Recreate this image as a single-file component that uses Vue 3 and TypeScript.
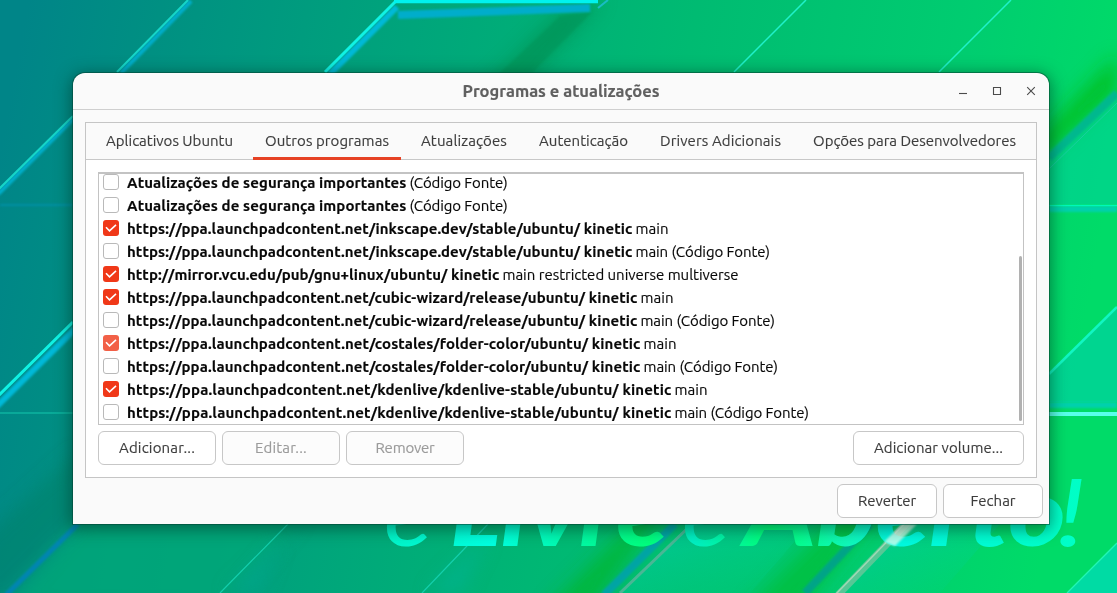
<script setup lang="ts">
import type { Directive } from 'vue'

interface Label { text: string; width: number }
interface Source { name: Label; detail: Label; checked?: boolean; partial?: boolean }

// Spreads the letters of a label so that it fills the given width.
const vFit: Directive<HTMLElement, number> = {
  mounted(el, { value }) {
    el.style.letterSpacing = '0px'
    const natural = el.getBoundingClientRect().width
    const count = (el.textContent ?? '').length
    el.style.letterSpacing = `${(value - natural) / count}px`
  },
}

const tabs: Label[] = [
  { text: 'Aplicativos Ubuntu', width: 127 },
  { text: 'Outros programas', width: 124 },
  { text: 'Atualizações', width: 86 },
  { text: 'Autenticação', width: 89 },
  { text: 'Drivers Adicionais', width: 121 },
  { text: 'Opções para Desenvolvedores', width: 203 },
]
const activeTab = 1

const ppa = (path: string, width: number): Label => ({
  text: `https://ppa.launchpadcontent.net/${path}/ubuntu/ kinetic`,
  width,
})
const main: Label = { text: 'main', width: 33 }
const mainSource: Label = { text: 'main (Código Fonte)', width: 134.5 }
const security: Source = {
  name: { text: 'Atualizações de segurança importantes', width: 279.5 },
  detail: { text: '(Código Fonte)', width: 98 },
}

const sources: Source[] = [
  security,
  security,
  { name: ppa('inkscape.dev/stable', 505.5), detail: main, checked: true },
  { name: ppa('inkscape.dev/stable', 505.5), detail: mainSource },
  {
    name: { text: 'http://mirror.vcu.edu/pub/gnu+linux/ubuntu/ kinetic', width: 372.5 },
    detail: { text: 'main restricted universe multiverse', width: 236 },
    checked: true,
  },
  { name: ppa('cubic-wizard/release', 510.5), detail: main, checked: true },
  { name: ppa('cubic-wizard/release', 510.5), detail: mainSource },
  { name: ppa('costales/folder-color', 513.5), detail: main, checked: true, partial: true },
  { name: ppa('costales/folder-color', 513.5), detail: mainSource },
  { name: ppa('kdenlive/kdenlive-stable', 544.5), detail: main, checked: true },
  { name: ppa('kdenlive/kdenlive-stable', 544.5), detail: mainSource },
]
</script>

<template>
  <div class="desktop">
    <svg class="wallpaper" viewBox="0 0 1117 593" width="1117" height="593">
      <defs>
        <linearGradient id="base" gradientUnits="userSpaceOnUse" x1="0" y1="150" x2="1080" y2="350">
          <stop offset="0" stop-color="#008588" />
          <stop offset="0.12" stop-color="#009082" />
          <stop offset="0.35" stop-color="#00a57b" />
          <stop offset="0.6" stop-color="#00bb72" />
          <stop offset="0.85" stop-color="#00cd70" />
          <stop offset="1" stop-color="#00db68" />
        </linearGradient>
        <linearGradient id="teal" x1="0" y1="0" x2="1" y2="1">
          <stop offset="0" stop-color="#00c8a8" stop-opacity="0.75" />
          <stop offset="1" stop-color="#00d68c" stop-opacity="0" />
        </linearGradient>
        <linearGradient id="letters" gradientUnits="userSpaceOnUse" x1="380" y1="0" x2="1090" y2="0">
          <stop offset="0" stop-color="#00f5c8" />
          <stop offset="0.16" stop-color="#00ffe0" />
          <stop offset="0.28" stop-color="#00f9a4" />
          <stop offset="0.38" stop-color="#00ff7c" />
          <stop offset="0.44" stop-color="#00efc4" />
          <stop offset="0.55" stop-color="#00ff78" />
          <stop offset="0.66" stop-color="#10f8ba" />
          <stop offset="0.72" stop-color="#00f9e0" />
          <stop offset="1" stop-color="#00ffc4" />
        </linearGradient>
        <filter id="soft" x="-30%" y="-30%" width="160%" height="160%"><feGaussianBlur stdDeviation="1" /></filter>
        <filter id="wide" x="-50%" y="-50%" width="200%" height="200%"><feGaussianBlur stdDeviation="9" /></filter>
      </defs>
      <rect width="1117" height="593" fill="url(#base)" />

      <!-- broad shading -->
      <g filter="url(#wide)">
        <path d="M-20 600V540L80 450V516L0 600Z" fill="#007f66" opacity="0.5" />
        <path d="M0 610L85 516H300L225 610Z" fill="#00a878" opacity="0.8" />
        <path d="M545 610L650 505H668L590 610Z" fill="#00b52d" opacity="0.75" />
        <path d="M745 610L845 510H880L800 610Z" fill="#00bd35" opacity="0.75" />
        <path d="M1030 170V145L1117 55V90Z" fill="#00bd22" opacity="0.85" />
      </g>
      <path d="M480 90L560 10L604 0L520 90Z" fill="#008f50" opacity="0.55" filter="url(#wide)" />
      <path d="M500 73L560 16L592 12L532 73Z" fill="#00955a" opacity="0.6" filter="url(#soft)" />
      <path d="M620 593L690 524H810L750 593Z" fill="url(#teal)" />
      <path d="M838 593L910 524H1000L940 593Z" fill="url(#teal)" />
      <path d="M1049 160L1117 94V204H1049Z" fill="#00d1a4" opacity="0.5" />
      <path d="M1049 374L1117 308V402H1049Z" fill="#00d1ac" opacity="0.6" />
      <path d="M1067 593L1117 543V593Z" fill="#00dba4" />
      <g filter="url(#wide)">
        <path d="M226 593L280 540L260 593Z" fill="#00a791" opacity="0.6" />
        <path d="M428 593L488 535L460 593Z" fill="#00b393" opacity="0.7" />
      </g>

      <!-- bevelled edges -->
      <g fill="none" filter="url(#soft)">
        <path d="M191 1L121 73M73 119L-2 194" stroke="#00aecb" stroke-width="4" />
        <path d="M397 7L330 74M76 328L-3 406" stroke="#00b9d8" stroke-width="6" />
        <path d="M398 15L590 8" stroke="#00adcb" stroke-width="8" />
        <path d="M0 205H73" stroke="#008fa5" stroke-width="2" />
        <path d="M78 524L6 595" stroke="#0085b2" stroke-width="5" />
        <path d="M675 524L604 595" stroke="#00a4a4" stroke-width="8" />
        <path d="M870 524L805 593" stroke="#00a487" stroke-width="8" />
        <path d="M1117 93L1049 158" stroke="#00b88e" stroke-width="8" />
        <path d="M1049 209H1117M1049 405H1117" stroke="#00d1ac" stroke-width="6" />
      </g>
      <g fill="none">
        <path d="M188 0L117 72M73 116L-2 190" stroke="#16d5c8" stroke-width="2" />
        <path d="M395 2L325 72M73 322L-2 396" stroke="#10f2e4" stroke-width="3" />
        <path d="M394 1.5H598" stroke="#00f2ee" stroke-width="3.5" />
        <path d="M608 0L598 8" stroke="#19bcc4" stroke-width="2" />
        <path d="M806 0L734 72M1011 0L939 72" stroke="#20f0ca" stroke-width="1.5" />
        <path d="M0 413H73" stroke="#13c8ae" stroke-width="1.2" />
        <path d="M288 524L220 593M488 524L422 593" stroke="#14cfad" stroke-width="1.2" />
        <path d="M692 524L620 593" stroke="#49b795" stroke-width="3" />
        <path d="M912 518L838 595" stroke="#57c796" stroke-width="7" />
        <path d="M910 518L835 595" stroke="#a1d9b4" stroke-width="1.5" />
        <path d="M1117 103L1049 169" stroke="#18ce9f" stroke-width="1" />
        <path d="M1049 205.5H1117" stroke="#00f7bb" stroke-width="1.5" />
        <path d="M1117 307L1049 374" stroke="#11f6c3" stroke-width="2.5" />
        <path d="M1049 414H1117" stroke="#58ffeb" stroke-width="4" />
        <path d="M1117 543L1067 593" stroke="#22f5b5" stroke-width="1.3" />
      </g>

      <g class="slogan" fill="url(#letters)">
        <text class="thin" x="384" y="546" textLength="48" lengthAdjust="spacingAndGlyphs">e</text>
        <text x="450" y="546" textLength="218" lengthAdjust="spacingAndGlyphs">Livre</text>
        <text class="thin" x="682" y="546" textLength="48" lengthAdjust="spacingAndGlyphs">e</text>
        <text x="744" y="546" textLength="322" lengthAdjust="spacingAndGlyphs">Aberto</text>
        <text class="mark" x="1056" y="546" textLength="30" lengthAdjust="spacingAndGlyphs">!</text>
      </g>
      <path d="M884 542L902 524H917L895 546Z" fill="#e1ffef" opacity="0.75" filter="url(#soft)" />
    </svg>

    <main class="window">
      <header class="titlebar">
        <h1><span v-fit="197">Programas e atualizações</span></h1>
        <div class="controls">
          <svg width="10" height="10" viewBox="0 0 10 10"><path d="M1 7.5H9" /></svg>
          <svg width="10" height="10" viewBox="0 0 10 10"><path d="M1.5 1.5H8.5V8.5H1.5Z" /></svg>
          <svg width="10" height="10" viewBox="0 0 10 10"><path d="M1.2 1.2L8.8 8.8M8.8 1.2L1.2 8.8" /></svg>
        </div>
      </header>

      <section class="notebook">
        <nav class="tabs">
          <button v-for="(tab, i) in tabs" :key="tab.text" class="tab" :class="{ active: i === activeTab }">
            <span v-fit="tab.width">{{ tab.text }}</span>
          </button>
        </nav>
        <div class="page">
          <div class="list">
            <div v-for="(source, i) in sources" :key="i" class="row">
              <span class="check" :class="{ checked: source.checked, partial: source.partial }">
                <svg v-if="source.checked" width="16" height="16" viewBox="0 0 16 16"><path d="M3 7.3L6.5 10.8L13 4.8" /></svg>
              </span>
              <strong v-fit="source.name.width">{{ source.name.text }}</strong>
              <span v-fit="source.detail.width" class="detail">{{ source.detail.text }}</span>
            </div>
            <div class="scrollbar"></div>
          </div>
          <div class="actions">
            <button class="btn"><span v-fit="76">Adicionar...</span></button>
            <button class="btn" disabled><span v-fit="52">Editar...</span></button>
            <button class="btn" disabled><span v-fit="59">Remover</span></button>
            <button class="btn volume"><span v-fit="129">Adicionar volume...</span></button>
          </div>
        </div>
      </section>

      <footer class="footer">
        <button class="btn"><span v-fit="58">Reverter</span></button>
        <button class="btn"><span v-fit="45">Fechar</span></button>
      </footer>
    </main>
  </div>
</template>

<style>
body { margin: 0; overflow: hidden; }
</style>

<style scoped>
.desktop {
  position: relative;
  box-sizing: border-box;
  width: 1117px;
  height: 593px;
  padding: 73px 68px 0 73px;
  overflow: hidden;
  font-family: Ubuntu, "Noto Sans", "Open Sans", sans-serif;
  font-size: 15px;
  color: #3d3d3d;
}
.desktop * { box-sizing: border-box; }
.wallpaper { position: absolute; inset: 0; }
.slogan text { font: italic 900 93px Lato, sans-serif; }
.slogan .thin { font-weight: 400; }
.slogan .mark { font-weight: 400; }
.window {
  position: relative;
  display: flex;
  flex-direction: column;
  width: 976px;
  height: 451px;
  background: #fafafa;
  border-radius: 12px 12px 0 0;
  box-shadow: 0 0 0 1px rgba(0, 65, 50, 0.5), 0 3px 16px 2px rgba(0, 40, 25, 0.5);
  -webkit-text-stroke: 0.15px currentColor;
}
span, strong { white-space: nowrap; }
.titlebar {
  display: grid;
  grid-template-columns: 1fr auto 1fr;
  align-items: center;
  height: 37px;
  padding-right: 13px;
  border-bottom: 1px solid #cfcfcf;
}
h1 {
  grid-column: 2;
  margin: 0 -13px 0 0;
  font-size: 16.5px;
  line-height: 20px;
  color: #606060;
}
.controls { display: flex; justify-content: flex-end; gap: 24px; }
.controls svg { fill: none; stroke: #4b4b4b; stroke-width: 1.1; }
.notebook {
  display: flex;
  flex-direction: column;
  height: 356px;
  margin: 12px 12px 0;
  border: 1px solid #c5c5c5;
  background: #fff;
}
.tabs {
  display: flex;
  gap: 8px;
  height: 37px;
  padding-left: 8px;
  flex: none;
  background: #fafafa;
  border-bottom: 1px solid #c8c8c8;
}
.tab {
  height: 37px;
  padding: 0 12px;
  border: 0;
  border-bottom: 3px solid transparent;
  background: none;
  font: inherit;
  color: inherit;
  line-height: 36px;
}
.tab.active { border-color: #e64224; }
.page { padding: 12px; }
.list {
  position: relative;
  height: 253px;
  padding-left: 4px;
  border: 1px solid #c3c3c3;
  border-top-width: 2px;
  overflow: hidden;
  color: #080808;
}
.row { display: flex; align-items: center; height: 23px; position: relative; top: -2px; }
.row strong, .row .detail { line-height: 21px; margin-bottom: 2px; }
.row strong { margin-left: 8px; }
.detail { margin-left: 3px; }
.check {
  display: block;
  width: 16px;
  height: 16px;
  margin-top: -3px;
  border: 1px solid #b9b9b9;
  border-radius: 3px;
  background: #fff;
}
.checked { border: 0; background: #f03818; }
.partial { background: #f26047; }
.check svg { display: block; fill: none; stroke: #fff; stroke-width: 1.6; }
.scrollbar {
  position: absolute;
  right: 1px;
  top: 82px;
  width: 3px;
  height: 165px;
  border-radius: 2px;
  background: #b1b1b1;
}
.actions { display: flex; gap: 6px; margin-top: 6px; }
.btn {
  width: 118px;
  height: 34px;
  padding: 0;
  border: 1px solid #c7c7c7;
  border-radius: 6px;
  background: #fff;
  font: inherit;
  color: inherit;
  line-height: 32px;
}
.btn:disabled { background: #fcfcfc; color: #9b9b9b; }
.volume { width: 171px; margin-left: auto; }
.footer { display: flex; justify-content: flex-end; gap: 6px; padding: 6px 6px 0; }
.footer .btn { width: 100px; }
</style>
